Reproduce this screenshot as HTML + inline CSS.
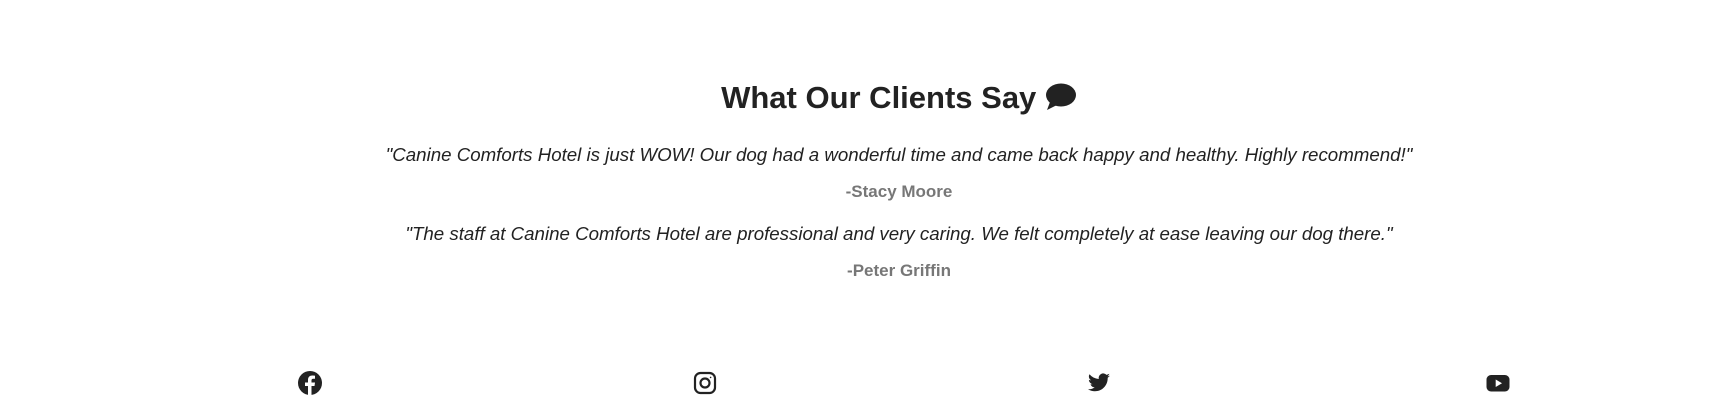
<!DOCTYPE html>
<html><head><meta charset="utf-8"><style>
body{margin:0;width:1718px;height:411px;background:#fff;font-family:"Liberation Sans",sans-serif;position:relative;overflow:hidden;color:#222}
.c{position:absolute;left:0;width:1798px;text-align:center;white-space:nowrap}
h2{margin:0;font-size:31px;font-weight:bold;color:#222}
.q{font-style:italic;font-size:18.7px;color:#222}
.a{font-weight:bold;font-size:17px;color:#777}
.i{position:absolute;top:371px;width:24px;height:24px}
</style></head><body>
<div class="c" style="top:80px"><h2>What Our Clients Say <svg width="32" height="28" viewBox="0 0 32 28" style="vertical-align:-3px"><ellipse cx="16" cy="12" rx="15" ry="11.5" fill="#222"/><path d="M5 19 L2 27 L12 22Z" fill="#222"/></svg></h2></div>
<div class="c q" style="top:144px">"Canine Comforts Hotel is just WOW! Our dog had a wonderful time and came back happy and healthy. Highly recommend!"</div>
<div class="c a" style="top:182px">-Stacy Moore</div>
<div class="c q" style="top:223px">"The staff at Canine Comforts Hotel are professional and very caring. We felt completely at ease leaving our dog there."</div>
<div class="c a" style="top:261px">-Peter Griffin</div>
<svg class="i" style="left:298px" viewBox="0 0 24 24"><circle cx="12" cy="12" r="12" fill="#222"/><path d="M13.5 24V15h3l.5-3.5h-3.5V9.5c0-1 .4-1.7 1.8-1.7H17V4.7c-.4 0-1.5-.2-2.7-.2-2.6 0-4.3 1.6-4.3 4.4v2.6H7V15h3v9z" fill="#fff"/></svg>
<svg class="i" style="left:693px" viewBox="0 0 24 24" fill="none" stroke="#222" stroke-width="2.2"><rect x="2" y="2" width="20" height="20" rx="5.5"/><circle cx="12" cy="12" r="4.5"/><circle cx="17.6" cy="6.4" r=".8" fill="#222" stroke="none"/></svg>
<svg class="i" style="left:1087px" viewBox="0 0 24 24"><path d="M23 4.6c-.8.4-1.7.6-2.6.7.9-.6 1.6-1.4 2-2.5-.9.5-1.9.9-2.9 1.1A4.5 4.5 0 0 0 11.8 8 12.8 12.8 0 0 1 2.5 3.3a4.5 4.5 0 0 0 1.4 6c-.7 0-1.4-.2-2-.6 0 2.200 1.6 4 3.6 4.4-.7.2-1.4.2-2 .1.6 1.8 2.2 3.1 4.2 3.1A9 9 0 0 1 1 18.2 12.8 12.8 0 0 0 7.9 20.2c8.3 0 12.8-6.9 12.8-12.8v-.6c.9-.6 1.6-1.4 2.3-2.2z" fill="#222"/></svg>
<svg class="i" style="left:1486px" viewBox="0 0 24 24"><rect x="0.5" y="4" width="23" height="16.5" rx="4.5" fill="#222"/><path d="M9.7 8.5v7.5l6.3-3.75z" fill="#fff"/></svg>
</body></html>
